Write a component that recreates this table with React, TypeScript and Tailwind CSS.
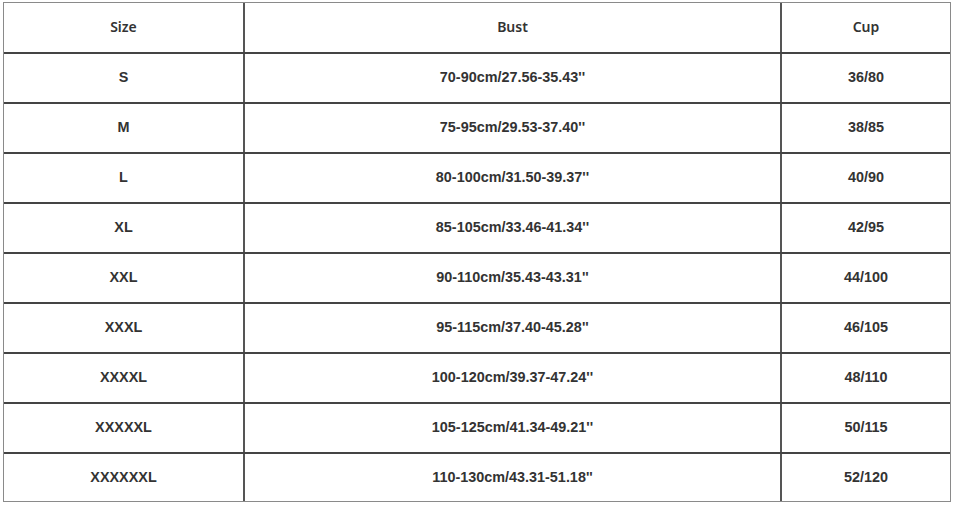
const rows = [
  ["S", "70-90cm/27.56-35.43''", "36/80"],
  ["M", "75-95cm/29.53-37.40''", "38/85"],
  ["L", "80-100cm/31.50-39.37''", "40/90"],
  ["XL", "85-105cm/33.46-41.34''", "42/95"],
  ["XXL", "90-110cm/35.43-43.31''", "44/100"],
  ["XXXL", "95-115cm/37.40-45.28''", "46/105"],
  ["XXXXL", "100-120cm/39.37-47.24''", "48/110"],
  ["XXXXXL", "105-125cm/41.34-49.21''", "50/115"],
  ["XXXXXXL", "110-130cm/43.31-51.18''", "52/120"],
];

export default function App() {
  return (
    <div className="w-[954px] h-[506px] bg-white pl-[3px] pt-[2px] font-['Liberation_Sans',Arial,sans-serif] text-[14.4px] font-bold text-[#333]">
      <div className="w-[948px] h-[500px] border border-[#8a8a8a] flex flex-col">
        {/* Header */}
        <div className="grid grid-cols-[239px_2px_535px_2px_1fr] h-[51px] border-b-2 border-[#444] shrink-0">
          <div className="flex items-center justify-center pb-[2px] font-['Noto_Sans',sans-serif] font-semibold text-[14px]">Size</div>
          <div className="bg-[#555]" />
          <div className="flex items-center justify-center pb-[2px] font-['Noto_Sans',sans-serif] font-semibold text-[14px]">Bust</div>
          <div className="bg-[#555]" />
          <div className="flex items-center justify-center pb-[2px] font-['Noto_Sans',sans-serif] font-semibold text-[14px]">Cup</div>
        </div>
        {rows.map((r, i) => (
          <div
            key={r[0]}
            className={`grid grid-cols-[239px_2px_535px_2px_1fr] ${i < rows.length - 1 ? "h-[50px] border-b-2 border-[#444] shrink-0" : "flex-1"}`}
          >
            <div className="flex items-center justify-center">{r[0]}</div>
            <div className="bg-[#555]" />
            <div className="flex items-center justify-center">{r[1]}</div>
            <div className="bg-[#555]" />
            <div className="flex items-center justify-center">{r[2]}</div>
          </div>
        ))}
      </div>
    </div>
  );
}
